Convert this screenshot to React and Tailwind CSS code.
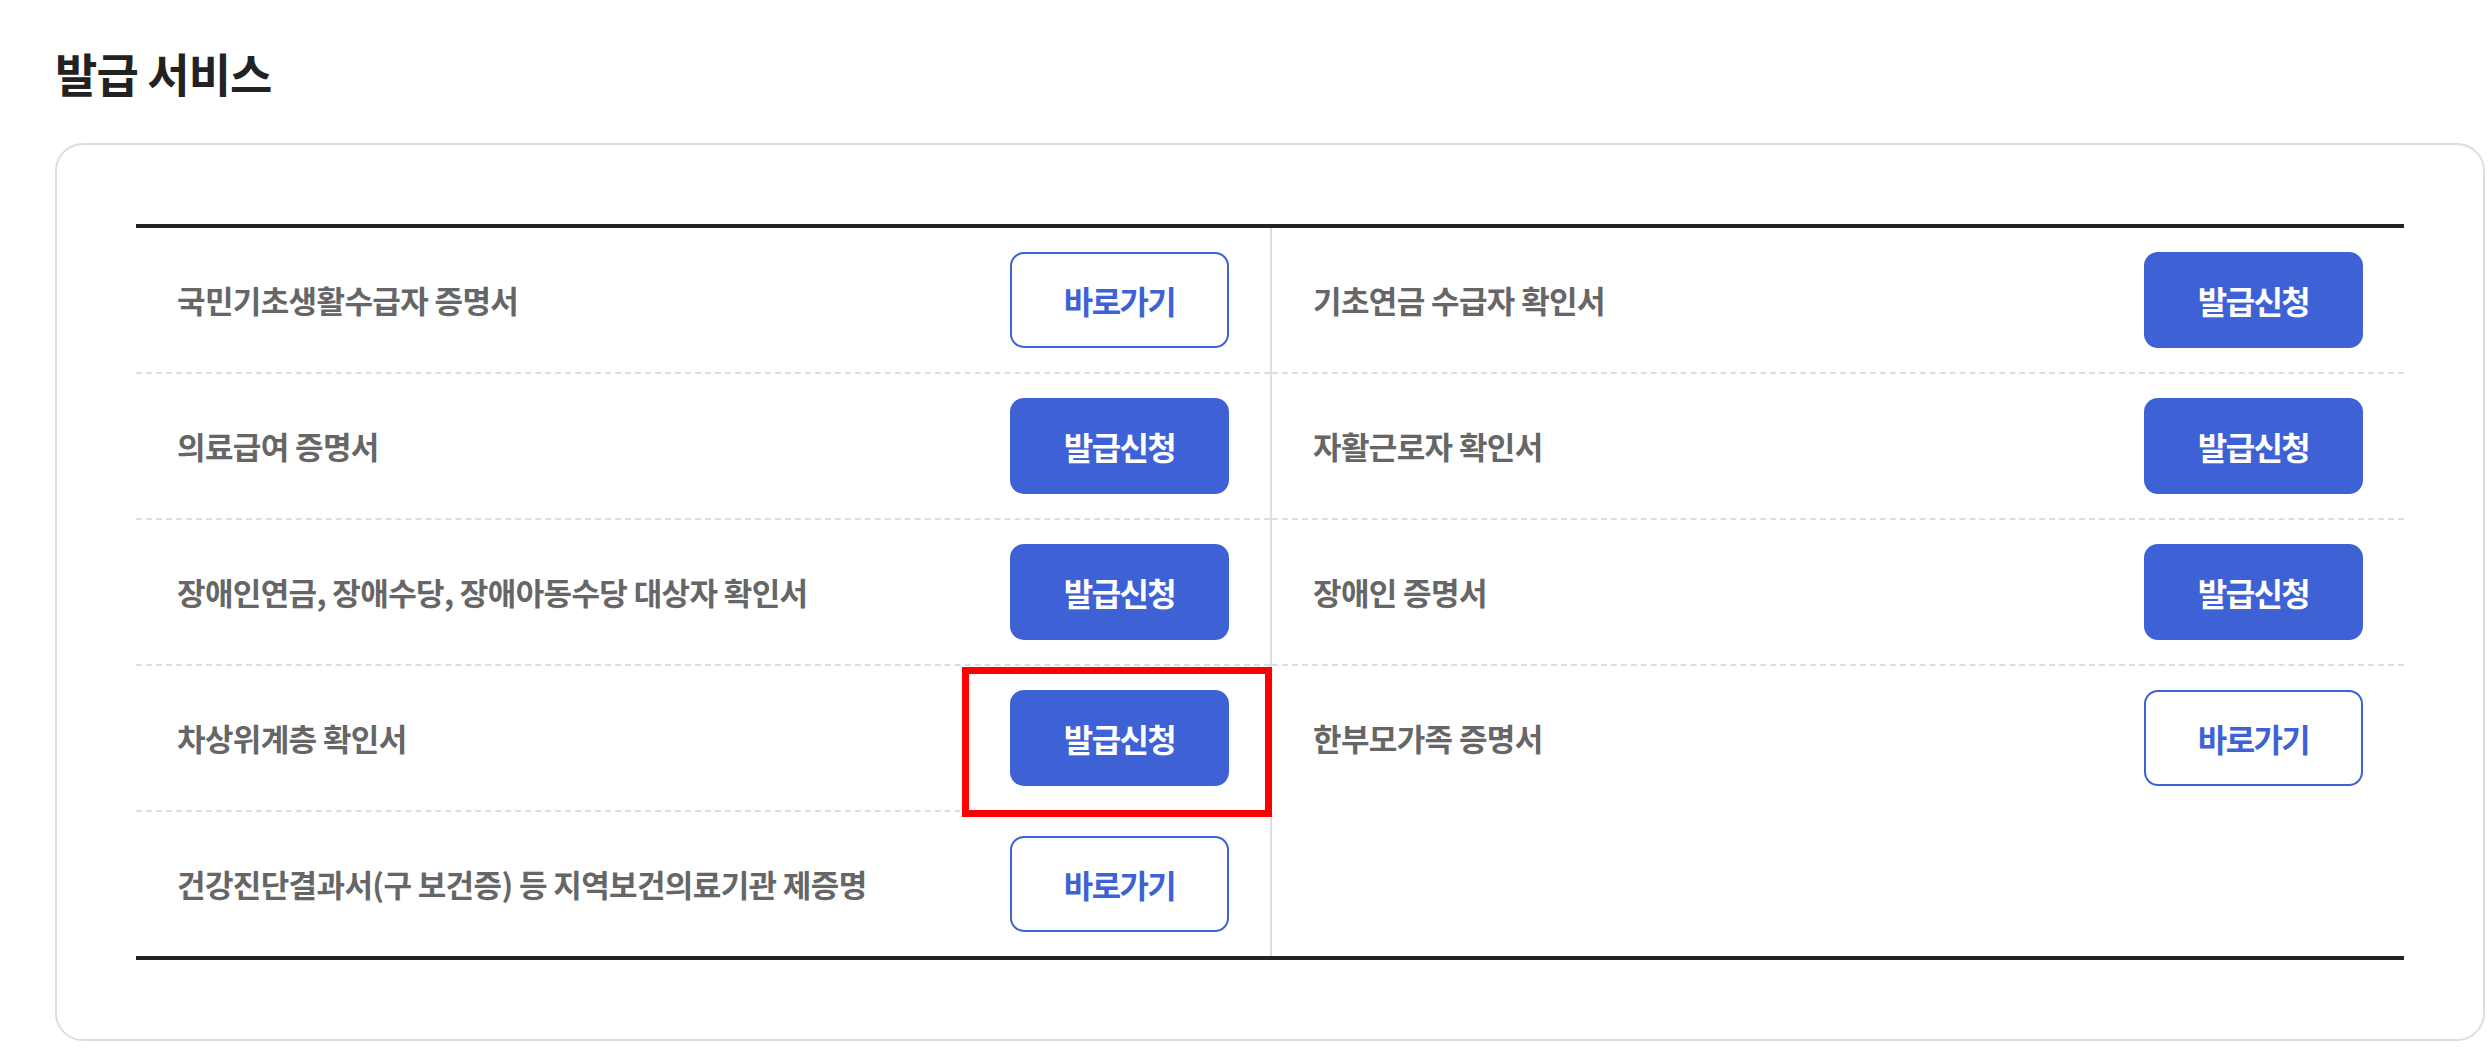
import React from 'react';

const leftItems = [
    { name: '국민기초생활수급자 증명서', type: 'link' },
    { name: '의료급여 증명서', type: 'apply' },
    { name: '장애인연금, 장애수당, 장애아동수당 대상자 확인서', type: 'apply' },
    { name: '차상위계층 확인서', type: 'apply', marked: true },
    { name: '건강진단결과서(구 보건증) 등 지역보건의료기관 제증명', type: 'link' },
];

const rightItems = [
    { name: '기초연금 수급자 확인서', type: 'apply' },
    { name: '자활근로자 확인서', type: 'apply' },
    { name: '장애인 증명서', type: 'apply' },
    { name: '한부모가족 증명서', type: 'link' },
];

function ActionButton({ type }) {
    if (type === 'link') {
        return (
            <button className="w-[219px] h-[96px] shrink-0 rounded-[14px] border-2 border-[#3e62d6] bg-white text-[#3e62d6] text-[32px] font-bold tracking-[-0.05em]">
                바로가기
            </button>
        );
    }
    return (
        <button className="w-[219px] h-[96px] shrink-0 rounded-[14px] bg-[#3e62d6] text-white text-[32px] font-bold tracking-[-0.05em]">
            발급신청
        </button>
    );
}

function Row({ item, last }) {
    return (
        <li
            className={
                last
                    ? 'h-[144px] flex items-center justify-between px-[41px]'
                    : 'h-[146px] flex items-center justify-between px-[41px] border-b-2 border-dashed border-[#dddddd]'
            }
        >
            <span className="text-[31px] font-semibold text-[#666666] tracking-[-0.02em]">{item.name}</span>
            <span className="relative flex">
                <ActionButton type={item.type} />
                {item.marked && (
                    <span className="absolute -top-[23px] -bottom-[31px] -left-[48px] -right-[43px] border-[7px] border-[#ff0000] pointer-events-none" />
                )}
            </span>
        </li>
    );
}

export default function App() {
    return (
        <div
            className="min-h-screen bg-white pl-[55px] pr-[7px] pt-[46px]"
            style={{ fontFamily: '"Noto Sans CJK KR", "Noto Sans", sans-serif' }}
        >
            <h2 className="text-[46px] leading-[52px] font-bold text-[#222222] tracking-[-0.02em]">발급 서비스</h2>

            <div className="mt-[45px] border-2 border-[#dedede] rounded-[28px] p-[79px]">
                <div className="grid grid-cols-2 border-t-4 border-b-4 border-[#222222]">
                    <ul className="flex flex-col">
                        {leftItems.map((item, i) => (
                            <Row key={item.name} item={item} last={i === leftItems.length - 1} />
                        ))}
                    </ul>
                    <ul className="flex flex-col border-l-2 border-[#dddddd]">
                        {rightItems.map((item, i) => (
                            <Row key={item.name} item={item} last={i === rightItems.length - 1} />
                        ))}
                    </ul>
                </div>
            </div>
        </div>
    );
}
